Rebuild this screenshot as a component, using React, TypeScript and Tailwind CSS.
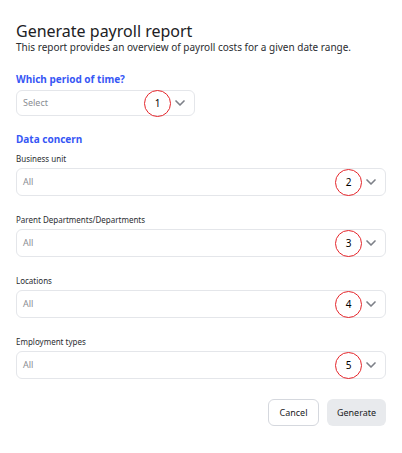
import { ChevronDown } from "lucide-react";

type Field = { label: string; marker: number };

const fields: Field[] = [
  { label: "Business unit", marker: 2 },
  { label: "Parent Departments/Departments", marker: 3 },
  { label: "Locations", marker: 4 },
  { label: "Employment types", marker: 5 },
];

function Marker({ n }: { n: number }) {
  return (
    <span className="flex h-[27px] w-[27px] shrink-0 items-center justify-center rounded-full border border-[#e5252a] text-[10px] text-black">
      {n}
    </span>
  );
}

function SelectBox({ placeholder, marker, narrow }: { placeholder: string; marker: number; narrow?: boolean }) {
  return (
    <div
      className={`flex items-center rounded-md border border-[#e4e6ea] bg-white pl-[6px] pr-[6px] ${
        narrow ? "h-[26px] w-[179px]" : "h-[28px] w-full"
      }`}
    >
      <span className="flex-1 text-[9px] text-[#8a8d93]">{placeholder}</span>
      <Marker n={marker} />
      <ChevronDown className="ml-[1px] h-4 w-4 text-[#7d8088]" strokeWidth={2.5} />
    </div>
  );
}

export default function App() {
  return (
    <div
      className="min-h-screen w-full bg-white px-4 pt-[21px] text-[#1f2328]"
      style={{ fontFamily: '"Noto Sans", "Open Sans", sans-serif' }}
    >
      <h1 className="text-[16px] leading-[20px] text-[#202124]">Generate payroll report</h1>
      <p className="text-[10px] leading-[12px] text-[#2b2d31]">
        This report provides an overview of payroll costs for a given date range.
      </p>

      <h2 className="mt-[19px] text-[10px] font-bold leading-[14px] text-[#3757f5]">Which period of time?</h2>
      <div className="mt-[4px]">
        <SelectBox placeholder="Select" marker={1} narrow />
      </div>

      <h2 className="mt-[16px] text-[10px] font-bold leading-[14px] text-[#3757f5]">Data concern</h2>
      <div className="mt-[7px] flex flex-col gap-[18px]">
        {fields.map((f) => (
          <div key={f.label} className="flex flex-col">
            <label className="text-[8px] leading-[11px] text-[#2b2d31]">{f.label}</label>
            <div className="mt-[4px]">
              <SelectBox placeholder="All" marker={f.marker} />
            </div>
          </div>
        ))}
      </div>

      <div className="mt-[20px] flex justify-end gap-[8px]">
        <button className="h-[27px] w-[51px] rounded-md border border-[#d5d8de] bg-white text-[9px] text-[#202124]">
          Cancel
        </button>
        <button className="h-[27px] w-[59px] rounded-md bg-[#e8eaed] text-[9px] text-[#202124]">Generate</button>
      </div>
    </div>
  );
}
